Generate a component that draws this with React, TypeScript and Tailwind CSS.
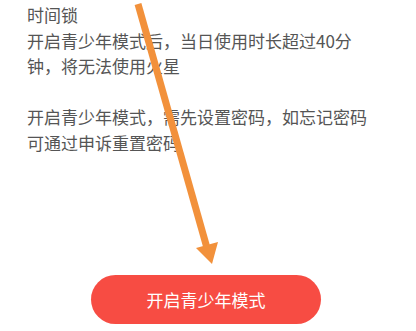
const lines = [
  '时间锁',
  '开启青少年模式后，当日使用时长超过40分',
  '钟，将无法使用火星',
  '',
  '开启青少年模式，需先设置密码，如忘记密码',
  '可通过申诉重置密码',
];

function Arrow() {
  return (
    <svg className="pointer-events-none absolute left-0 top-0" width="416" height="331" viewBox="0 0 416 331">
      <line x1="138" y1="4" x2="207" y2="248" stroke="#f2913b" strokeWidth="7" />
      <polygon points="196,248 218,242 212,264" fill="#f2913b" />
    </svg>
  );
}

export default function App() {
  return (
    <div className="relative h-[331px] w-[416px] overflow-hidden bg-white" style={{ fontFamily: '"Noto Sans CJK SC", "Noto Sans", sans-serif' }}>
      <div className="pl-[27px] pt-[2px] text-[17px] leading-[25.5px] text-[#555555]">
        {lines.map((l, i) => (
          <div key={i} className="h-[25.5px] whitespace-nowrap">{l}</div>
        ))}
      </div>
      <div className="mt-[120px] flex justify-center">
        <button className="ml-[-4px] flex h-[49px] w-[230px] items-center justify-center rounded-full bg-[#f74c43] text-[17px] text-white">
          开启青少年模式
        </button>
      </div>
      <Arrow />
    </div>
  );
}
